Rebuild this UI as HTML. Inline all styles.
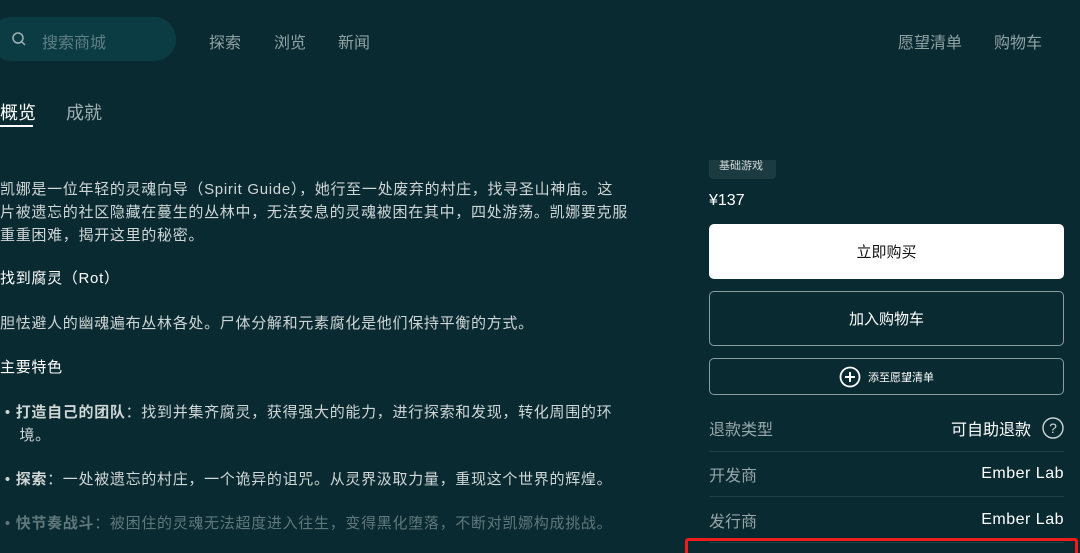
<!DOCTYPE html>
<html><head><meta charset="utf-8"><style>
*{margin:0;padding:0;box-sizing:border-box}
html,body{width:1080px;height:553px;overflow:hidden}
body{background:#0a2a31;font-family:"Liberation Sans","Noto Sans CJK SC",sans-serif;color:#d6dcdc;position:relative}
.a{position:absolute;white-space:nowrap}
.search{left:-10px;top:17px;width:186px;height:44px;border-radius:22px;background:#0b3c44}
.nav{font-size:16px;color:#8fa2a4;top:29px}
.p{font-size:15px;left:0;line-height:23px;color:#cfd6d6;letter-spacing:0.7px}
.btn{position:absolute;left:709px;width:355px;border-radius:5px;display:flex;align-items:center;justify-content:center;font-size:14px}
.row{position:absolute;left:709px;width:355px;font-size:16px;display:flex;justify-content:space-between;align-items:center;height:20px}
.lbl{color:#97a6a8}
.line{position:absolute;left:709px;width:355px;height:1px;background:#1f3f45}
</style></head><body>
<div class="a search"></div>
<svg class="a" style="left:11px;top:31px" width="16" height="16" viewBox="0 0 16 16"><circle cx="7" cy="7" r="5" fill="none" stroke="#9fb1b3" stroke-width="1.5"/><path d="M11 11l3 3" stroke="#9fb1b3" stroke-width="1.5"/></svg>
<div class="a nav" style="left:42px;color:#5f7f84">搜索商城</div>
<div class="a nav" style="left:209px">探索</div>
<div class="a nav" style="left:274px">浏览</div>
<div class="a nav" style="left:338px">新闻</div>
<div class="a nav" style="left:898px">愿望清单</div>
<div class="a nav" style="left:994px">购物车</div>
<div class="a" style="left:0;top:99px;font-size:18px;color:#fff">概览</div>
<div class="a" style="left:0;top:125px;width:33px;height:2px;background:#fff"></div>
<div class="a" style="left:66px;top:99px;font-size:18px;color:#9fb0b2">成就</div>
<div class="a p" style="top:178px">凯娜是一位年轻的灵魂向导（Spirit Guide），她行至一处废弃的村庄，找寻圣山神庙。这<br>片被遗忘的社区隐藏在蔓生的丛林中，无法安息的灵魂被困在其中，四处游荡。凯娜要克服<br>重重困难，揭开这里的秘密。</div>
<div class="a p" style="top:267px;color:#fff">找到腐灵（Rot）</div>
<div class="a p" style="top:312px">胆怯避人的幽魂遍布丛林各处。尸体分解和元素腐化是他们保持平衡的方式。</div>
<div class="a p" style="top:356px;color:#fff">主要特色</div>
<div class="a p" style="top:401px">&nbsp;• <b>打造自己的团队</b>：找到并集齐腐灵，获得强大的能力，进行探索和发现，转化周围的环<br>&nbsp;&nbsp;&nbsp;&nbsp;境。</div>
<div class="a p" style="top:468px">&nbsp;• <b>探索</b>：一处被遗忘的村庄，一个诡异的诅咒。从灵界汲取力量，重现这个世界的辉煌。</div>
<div class="a p" style="top:512px;color:#5f787c">&nbsp;• <b>快节奏战斗</b>：被困住的灵魂无法超度进入往生，变得黑化堕落，不断对凯娜构成挑战。</div>
<div class="a" style="left:709px;top:150px;width:67px;height:29px;background:#1c3b40;border-radius:4px;font-size:11px;color:#cfd6d6;padding:6px 0 0 10px;clip-path:inset(10px 0 0 0)"><span style="position:relative;top:1px">基础游戏</span></div>
<div class="a" style="left:709px;top:192px;font-size:16px;color:#fff">¥137</div>
<div class="btn" style="top:224px;height:55px;background:#fff;color:#111;font-size:15px">立即购买</div>
<div class="btn" style="top:291px;height:55px;border:1px solid #8a9c9e;color:#fff;font-size:15px">加入购物车</div>
<div class="btn" style="top:358px;height:37px;border:1px solid #8a9c9e;color:#fff;font-size:11px"><svg width="22" height="22" viewBox="0 0 22 22" style="margin-right:7px"><circle cx="11" cy="11" r="9.5" fill="none" stroke="#fff" stroke-width="1.8"/><path d="M11 6v10M6 11h10" stroke="#fff" stroke-width="2"/></svg>添至愿望清单</div>
<div class="row" style="top:418px"><span class="lbl">退款类型</span><span style="color:#fff;display:flex;align-items:center">可自助退款<svg width="22" height="22" viewBox="0 0 22 22" style="margin-left:11px"><circle cx="11" cy="11" r="10" fill="none" stroke="#cfd6d6" stroke-width="1.4"/><text x="11" y="16" text-anchor="middle" font-size="14" fill="#cfd6d6" font-family="Liberation Sans">?</text></svg></span></div>
<div class="line" style="top:451px"></div>
<div class="row" style="top:464px"><span class="lbl">开发商</span><span style="color:#fff;letter-spacing:0.5px">Ember Lab</span></div>
<div class="line" style="top:496px"></div>
<div class="row" style="top:510px"><span class="lbl">发行商</span><span style="color:#fff;letter-spacing:0.5px">Ember Lab</span></div>
<div class="line" style="top:542px"></div>
<div class="a" style="left:685px;top:538px;width:393px;height:30px;border:3px solid #f01c1c;border-radius:3px"></div>
</body></html>
